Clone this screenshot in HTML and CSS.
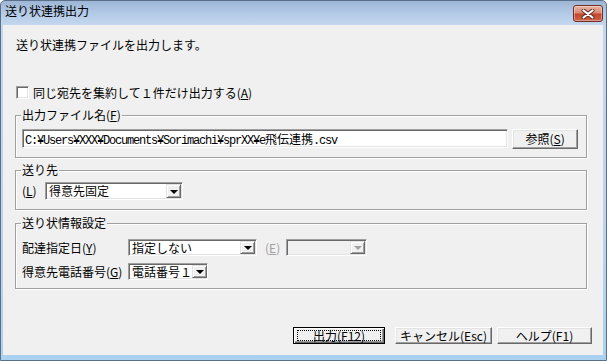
FILE: index.html
```html
<!DOCTYPE html>
<html lang="ja">
<head>
<meta charset="utf-8">
<title>送り状連携出力</title>
<link rel="stylesheet" href="styles.css">
</head>
<body>
<div class="window">
  <div class="titlebar">
    <span class="title">送り状連携出力</span>
    <div class="close">
      <svg width="14" height="10" viewBox="0 0 14 10">
        <path d="M2.5 1.5 L11.5 8.5 M11.5 1.5 L2.5 8.5" stroke="#5a2a20" stroke-width="4" stroke-linecap="round"/>
        <path d="M2.5 1.5 L11.5 8.5 M11.5 1.5 L2.5 8.5" stroke="#ffffff" stroke-width="2.2" stroke-linecap="round"/>
      </svg>
    </div>
  </div>
  <div class="client">
    <p class="intro">送り状連携ファイルを出力します。</p>
    <div class="check"><span class="checkbox"></span><span>同じ宛先を集約して１件だけ出力する(<u>A</u>)</span></div>

    <div class="group g1">
      <div class="legend">出力ファイル名(<u>F</u>)</div>
      <div class="row">
        <div class="edit"><span class="mono">C:¥Users¥XXX¥Documents¥Sorimachi¥sprXX¥e</span><span class="cjk">飛伝連携</span><span class="mono">.csv</span></div>
        <div class="btn ref">参照(<u>S</u>)</div>
      </div>
    </div>

    <div class="group g2">
      <div class="legend">送り先</div>
      <div class="row">
        <span class="lbl lbl-l">(<u>L</u>)</span>
        <div class="combo c-dest"><span class="val">得意先固定</span><span class="arrow"><i></i></span></div>
      </div>
    </div>

    <div class="group g3">
      <div class="legend">送り状情報設定</div>
      <div class="row r1">
        <span class="lbl lbl-w">配達指定日(<u>Y</u>)</span>
        <div class="combo c-date"><span class="val">指定しない</span><span class="arrow"><i></i></span></div>
        <span class="lbl lbl-e disabled">(<u>E</u>)</span>
        <div class="combo c-dis disabled"><span class="val"></span><span class="arrow"><i></i></span></div>
      </div>
      <div class="row r2">
        <span class="lbl lbl-w">得意先電話番号(<u>G</u>)</span>
        <div class="combo c-tel"><span class="val">電話番号１</span><span class="arrow"><i></i></span></div>
      </div>
    </div>

    <div class="actions">
      <div class="btn default"><span class="focus">出力(F12)</span></div>
      <div class="btn cancel">キャンセル(Esc)</div>
      <div class="btn help">ヘルプ(F1)</div>
    </div>
  </div>
</div>
</body>
</html>
```

FILE: styles.css
```css
* { box-sizing: border-box; }

body {
  margin: 0;
  background: #ffffff;
  font-family: "Noto Sans CJK JP", "Liberation Sans", sans-serif;
  font-size: 12px;
  color: #000;
}

u { text-decoration: underline; text-underline-offset: 1px; }

.window {
  width: 607px;
  height: 361px;
  display: flex;
  flex-direction: column;
  border: 1px solid #5b6f86;
  border-radius: 5px 5px 0 0;
  background: linear-gradient(180deg, #9db6d5 0px, #b3cae6 12px, #c3d7ee 24px, #bed4ec 60%, #a9d2f0 100%);
}

.titlebar {
  height: 24px;
  display: flex;
  align-items: flex-start;
  padding-left: 4px;
  flex: none;
}

.title {
  margin-top: 3px;
  line-height: 14px;
  color: #000;
}

.close {
  margin-left: auto;
  margin-right: 3px;
  margin-top: 4px;
  width: 30px;
  height: 17px;
  border: 1px solid #6e3127;
  border-radius: 3px;
  background: linear-gradient(180deg, #e9b4a6 0%, #d98a74 45%, #c2452c 55%, #d0654a 100%);
  box-shadow: inset 0 0 0 1px rgba(255,255,255,0.35);
  display: flex;
  align-items: center;
  justify-content: center;
}

.client {
  flex: 1;
  margin: 0 3px 5px 2px;
  background: #f0f0f0;
  padding: 13px 0 0 12px;
}

.intro {
  margin: 0 0 0 1px;
  line-height: 14px;
  height: 14px;
}

.check {
  margin: 34px 0 0 1px;
  height: 13px;
  display: flex;
  align-items: center;
  gap: 4px;
  line-height: 14px;
}

.checkbox {
  width: 13px;
  height: 13px;
  flex: none;
  background: #fff;
  border: 1px solid;
  border-color: #a0a0a0 #ffffff #ffffff #a0a0a0;
  box-shadow: inset 1px 1px #696969, inset -1px -1px #e3e3e3;
}

.group {
  width: 572px;
  border: 1px solid #a0a0a0;
  box-shadow: inset 1px 1px #ffffff, 1px 1px #ffffff;
  padding: 0 8px 8px 6px;
}

.legend {
  width: fit-content;
  margin: -8px 0 0 -1px;
  padding: 0 1px;
  line-height: 14px;
  height: 14px;
  background: #f0f0f0;
}

.g1 { margin-top: 16px; }
.g2 { margin-top: 12px; padding-bottom: 9px; }
.g3 { margin-top: 13px; }

.row {
  display: flex;
  align-items: flex-start;
}

.g1 .row { margin-top: 7px; }
.g2 .row { margin-top: 5px; }
.g3 .r1 { margin-top: 9px; }
.g3 .r2 { margin-top: 7px; }

.edit {
  width: 487px;
  height: 19px;
  background: #fff;
  border: 1px solid;
  border-color: #a0a0a0 #ffffff #ffffff #a0a0a0;
  box-shadow: inset 1px 1px #696969, inset -1px -1px #e3e3e3;
  padding: 0 0 0 2px;
  line-height: 17px;
  white-space: nowrap;
}

.mono {
  font-family: "Liberation Mono", "DejaVu Sans Mono", monospace;
  font-size: 12px;
  letter-spacing: -1.2px;
}

.cjk { letter-spacing: 0; }

.btn {
  display: flex;
  align-items: center;
  justify-content: center;
  background: #f0f0f0;
  border: 1px solid;
  border-color: #ffffff #696969 #696969 #ffffff;
  box-shadow: inset -1px -1px #a0a0a0, inset 1px 1px #e3e3e3;
  line-height: 14px;
  white-space: nowrap;
}

.ref {
  width: 66px;
  height: 20px;
  margin-left: 4px;
}

.lbl {
  line-height: 14px;
  white-space: nowrap;
  padding-top: 2px;
}

.lbl-l { width: 23px; }
.lbl-w { width: 106px; }
.lbl-e { width: 21px; margin-left: 8px; }

.disabled { color: #a0a0a0; }

.combo {
  display: flex;
  align-items: center;
  background: #fff;
  border: 1px solid;
  border-color: #a0a0a0 #ffffff #ffffff #a0a0a0;
  box-shadow: inset 1px 1px #696969, inset -1px -1px #e3e3e3;
  padding: 0 1px;
}

.combo .val {
  flex: 1;
  padding-left: 2px;
  line-height: 14px;
  white-space: nowrap;
}

.combo .arrow {
  width: 15px;
  align-self: stretch;
  margin: 1px 0;
  flex: none;
  background: #f0f0f0;
  border: 1px solid;
  border-color: #e3e3e3 #696969 #696969 #e3e3e3;
  box-shadow: inset 1px 1px #ffffff, inset -1px -1px #a0a0a0;
  display: flex;
  align-items: center;
  justify-content: center;
}

.combo .arrow i {
  width: 0;
  height: 0;
  border-left: 4px solid transparent;
  border-right: 4px solid transparent;
  border-top: 4px solid #000;
  margin-top: 1px;
}

.combo.disabled { background: #f0f0f0; }
.combo.disabled .arrow i { border-top-color: #a0a0a0; }

.c-dest { width: 138px; height: 18px; }
.c-date { width: 129px; height: 17px; }
.c-dis { width: 81px; height: 17px; }
.c-tel { width: 80px; height: 17px; }

.actions {
  margin-top: 38px;
  display: flex;
  justify-content: flex-end;
  padding-right: 11px;
}

.actions .btn { height: 17px; }

.default {
  width: 92px;
  border: 1px solid #000;
  box-shadow: inset 1px 1px #ffffff, inset -1px -1px #696969, inset -2px -2px #a0a0a0;
  padding: 2px 3px;
}

.default .focus {
  flex: 1;
  align-self: stretch;
  border: 1px dotted #000;
  display: flex;
  align-items: center;
  justify-content: center;
  line-height: 11px;
}

.cancel { width: 97px; margin-left: 10px; }
.help { width: 95px; margin-left: 5px; }
```
